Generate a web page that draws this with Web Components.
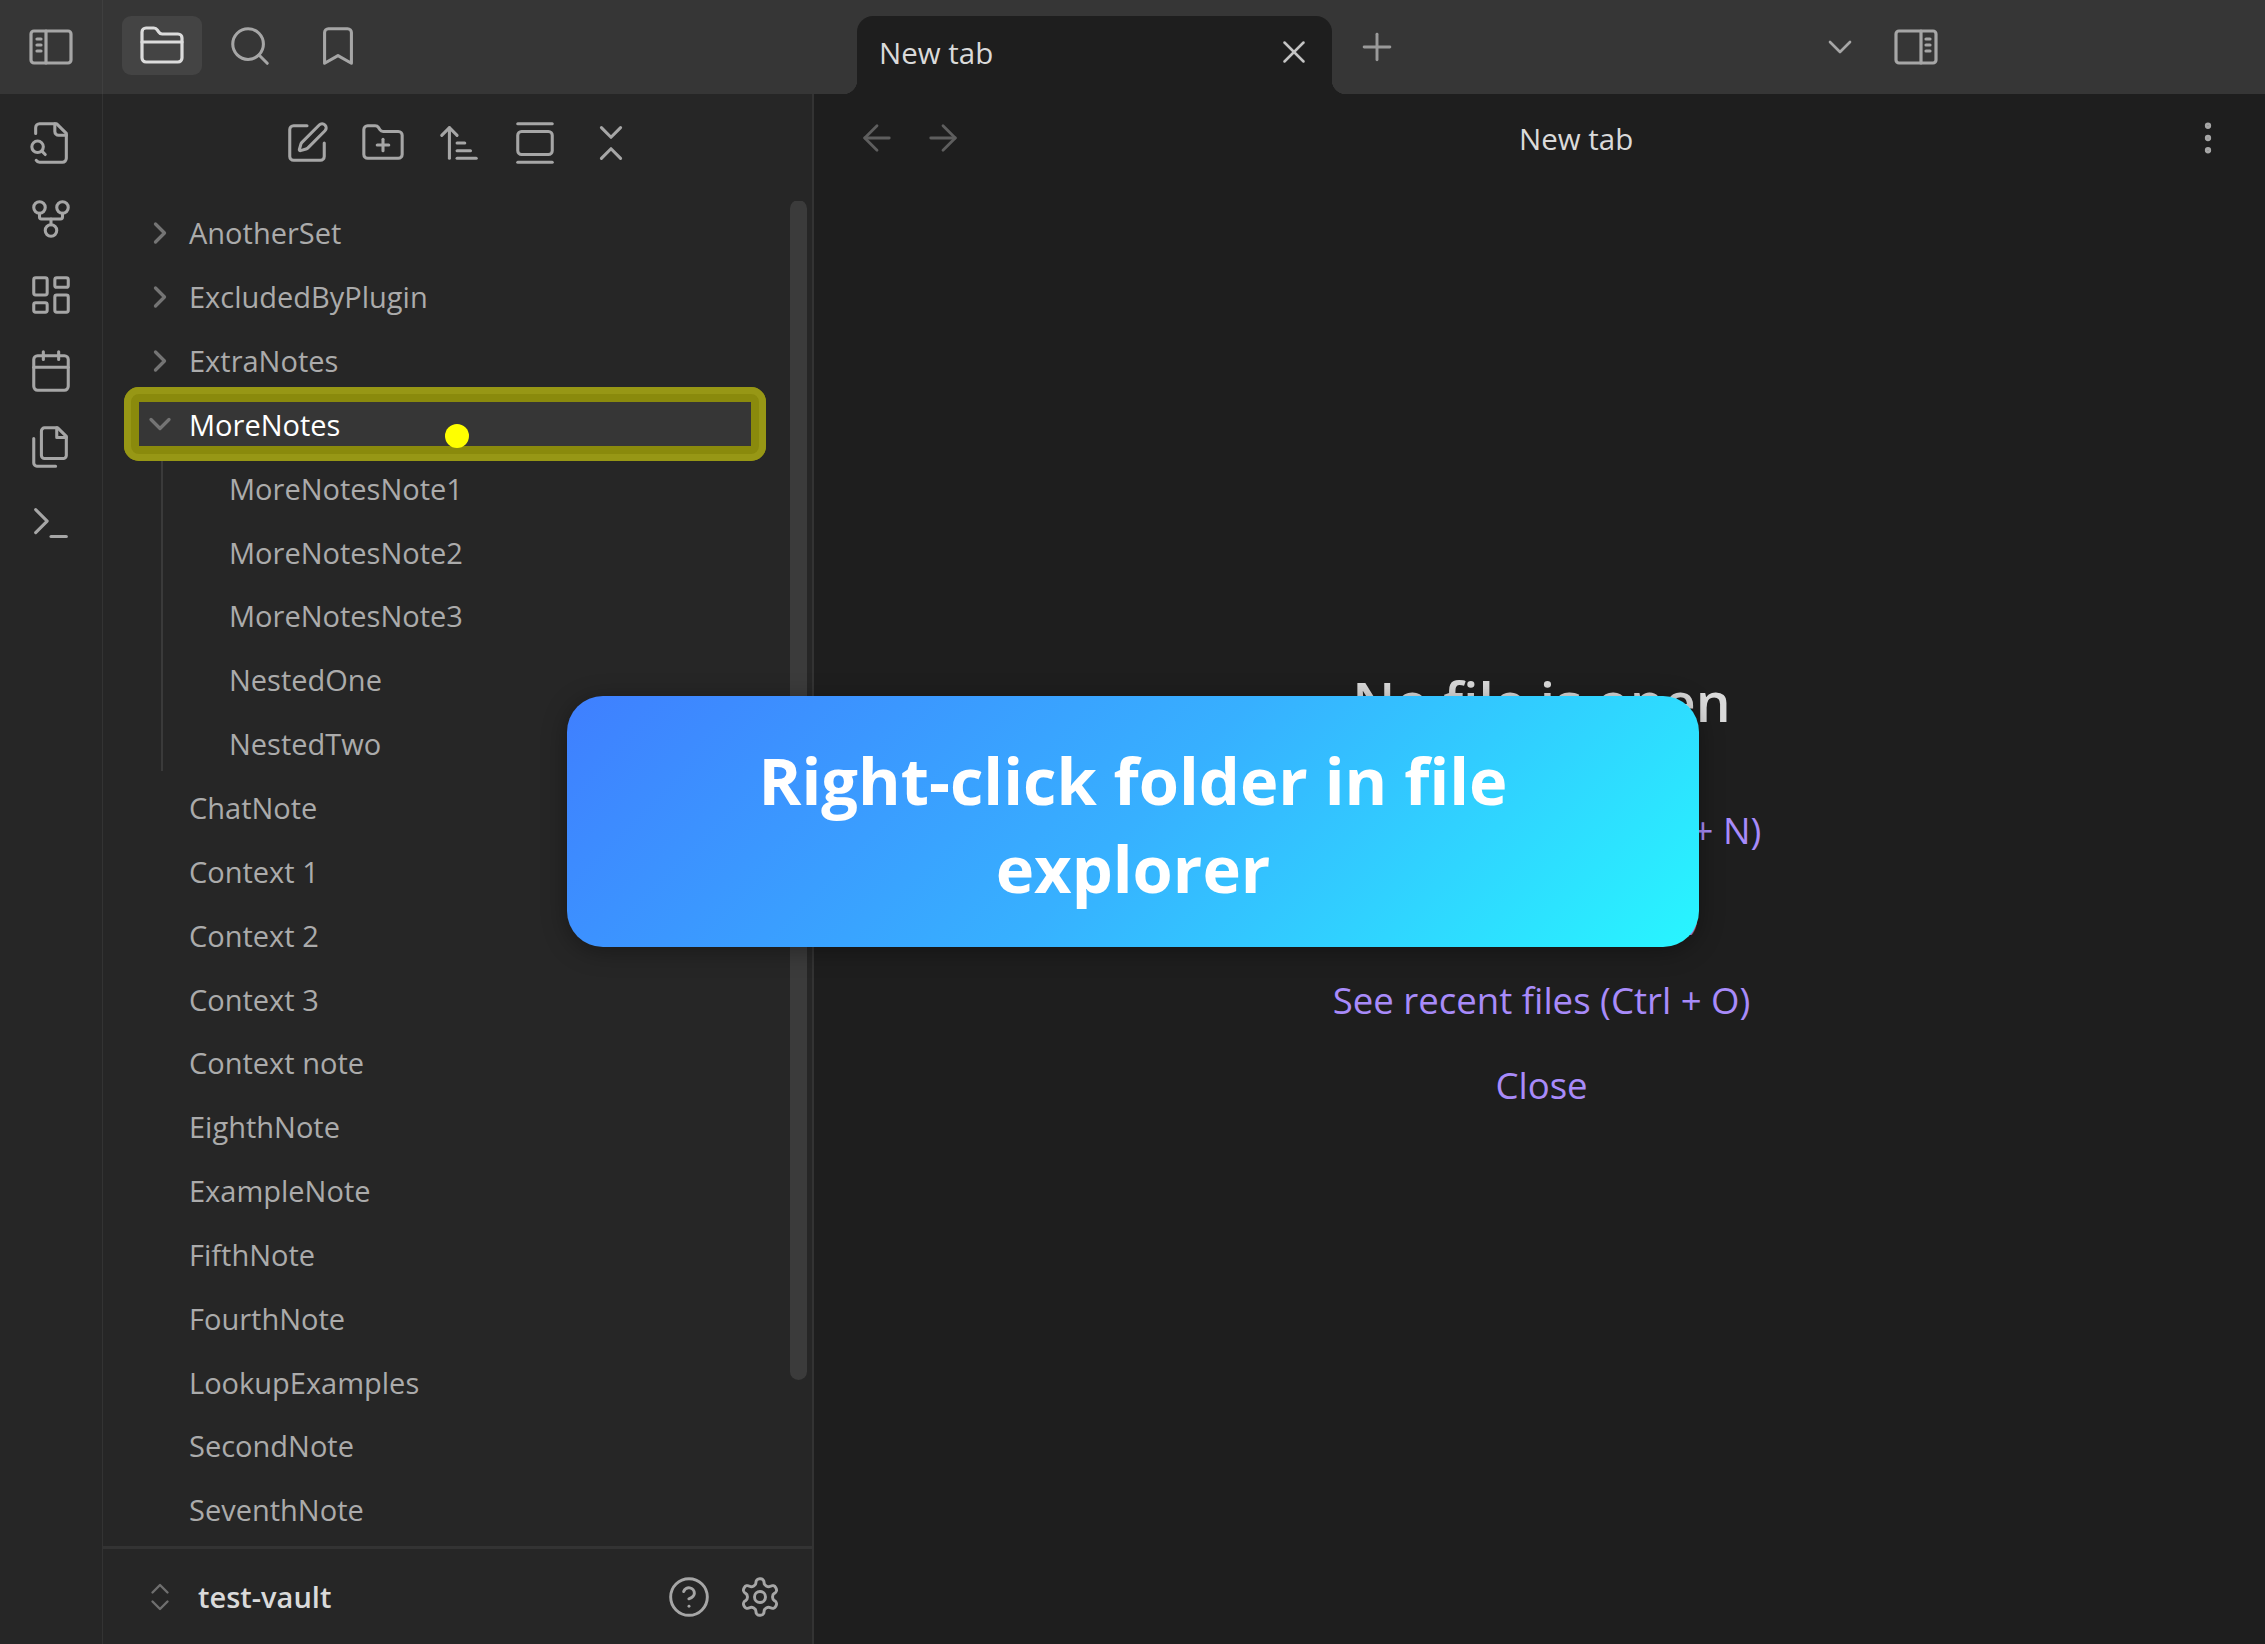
<!DOCTYPE html>
<html>
<head>
<meta charset="utf-8">
<title>test-vault</title>
<style>
    html, body { margin: 0; padding: 0; background: #1e1e1e; }
    body { font-family: "Open Sans", "Noto Sans", sans-serif; }
</style>
</head>
<body>
<app-frame>
    <title-bar slot="top"></title-bar>
    <ribbon-bar slot="ribbon"></ribbon-bar>
    <file-sidebar slot="side"></file-sidebar>
    <main-pane slot="main"></main-pane>
    <tutorial-card slot="overlay">Right-click folder in file explorer</tutorial-card>
</app-frame>

<script>
const ICONS = {
    sidebarLeft: '<rect x="2" y="4" width="20" height="16" rx="1.5"/><path d="M9.5 4v16"/><path d="M5 8h2M5 11h2M5 14h2"/>',
    sidebarRight: '<rect x="2" y="4" width="20" height="16" rx="1.5"/><path d="M14.5 4v16"/><path d="M17 8h2M17 11h2M17 14h2"/>',
    folder: '<path d="M20 20a2 2 0 0 0 2-2V8a2 2 0 0 0-2-2h-7.9a2 2 0 0 1-1.69-.9L9.6 3.9A2 2 0 0 0 7.93 3H4a2 2 0 0 0-2 2v13a2 2 0 0 0 2 2Z"/><path d="M2 10h20"/>',
    search: '<circle cx="11" cy="11" r="8"/><path d="m21 21-4.3-4.3"/>',
    bookmark: '<path d="m19 21-7-4-7 4V5a2 2 0 0 1 2-2h10a2 2 0 0 1 2 2v16z"/>',
    edit: '<path d="M12 3H5a2 2 0 0 0-2 2v14a2 2 0 0 0 2 2h14a2 2 0 0 0 2-2v-7"/><path d="M18.375 2.625a1 1 0 0 1 3 3l-9.013 9.014a2 2 0 0 1-.853.505l-2.873.84a.5.5 0 0 1-.62-.62l.84-2.873a2 2 0 0 1 .506-.852z"/>',
    folderPlus: '<path d="M20 20a2 2 0 0 0 2-2V8a2 2 0 0 0-2-2h-7.9a2 2 0 0 1-1.69-.9L9.6 3.9A2 2 0 0 0 7.93 3H4a2 2 0 0 0-2 2v13a2 2 0 0 0 2 2Z"/><path d="M12 10v6"/><path d="M9 13h6"/>',
    sort: '<path d="m3 8 4-4 4 4"/><path d="M7 4v16"/><path d="M11 12h4"/><path d="M11 16h7"/><path d="M11 20h10"/>',
    gallery: '<path d="M3 2h18"/><rect x="3" y="6" width="18" height="12" rx="2"/><path d="M3 22h18"/>',
    collapse: '<path d="m7 20 5-5 5 5"/><path d="m7 4 5 5 5-5"/>',
    fileSearch: '<path d="M14 2v4a2 2 0 0 0 2 2h4"/><path d="M4.268 21a2 2 0 0 0 1.727 1H18a2 2 0 0 0 2-2V7l-5-5H6a2 2 0 0 0-2 2v3"/><path d="m9 18-1.5-1.5"/><circle cx="5" cy="14" r="3"/>',
    fork: '<circle cx="12" cy="18" r="3"/><circle cx="6" cy="6" r="3"/><circle cx="18" cy="6" r="3"/><path d="M18 9v2c0 .6-.4 1-1 1H7c-.6 0-1-.4-1-1V9"/><path d="M12 12v3"/>',
    dashboard: '<rect x="3" y="3" width="7" height="9" rx="1"/><rect x="14" y="3" width="7" height="5" rx="1"/><rect x="14" y="12" width="7" height="9" rx="1"/><rect x="3" y="16" width="7" height="5" rx="1"/>',
    calendar: '<path d="M8 2v4"/><path d="M16 2v4"/><rect x="3" y="4" width="18" height="18" rx="2"/><path d="M3 10h18"/>',
    files: '<path d="M15.5 2H8.6c-.4 0-.8.2-1.1.5-.3.3-.5.7-.5 1.1v12.8c0 .4.2.8.5 1.1.3.3.7.5 1.1.5h9.8c.4 0 .8-.2 1.1-.5.3-.3.5-.7.5-1.1V6.5L15.5 2z"/><path d="M3 7.6v12.8c0 .4.2.8.5 1.1.3.3.7.5 1.1.5h9.8"/><path d="M15 2v5h5"/>',
    terminal: '<path d="m4 17 6-6-6-6"/><path d="M12 19h8"/>',
    close: '<path d="M18 6 6 18"/><path d="m6 6 12 12"/>',
    plus: '<path d="M5 12h14"/><path d="M12 5v14"/>',
    chevronDown: '<path d="m6 9 6 6 6-6"/>',
    chevronRight: '<path d="m9 18 6-6-6-6"/>',
    arrowLeft: '<path d="m12 19-7-7 7-7"/><path d="M19 12H5"/>',
    arrowRight: '<path d="M5 12h14"/><path d="m12 5 7 7-7 7"/>',
    more: '<circle cx="12" cy="5" r="1"/><circle cx="12" cy="12" r="1"/><circle cx="12" cy="19" r="1"/>',
    upDown: '<path d="m7 15 5 5 5-5"/><path d="m7 9 5-5 5 5"/>',
    help: '<circle cx="12" cy="12" r="10"/><path d="M9.09 9a3 3 0 0 1 5.83 1c0 2-3 3-3 3"/><path d="M12 17h.01"/>',
    gear: '<path d="M12.22 2h-.44a2 2 0 0 0-2 2v.18a2 2 0 0 1-1 1.73l-.43.25a2 2 0 0 1-2 0l-.15-.08a2 2 0 0 0-2.73.73l-.22.38a2 2 0 0 0 .73 2.73l.15.1a2 2 0 0 1 1 1.72v.51a2 2 0 0 1-1 1.74l-.15.09a2 2 0 0 0-.73 2.73l.22.38a2 2 0 0 0 2.73.73l.15-.08a2 2 0 0 1 2 0l.43.25a2 2 0 0 1 1 1.73V20a2 2 0 0 0 2 2h.44a2 2 0 0 0 2-2v-.18a2 2 0 0 1 1-1.73l.43-.25a2 2 0 0 1 2 0l.15.08a2 2 0 0 0 2.73-.73l.22-.39a2 2 0 0 0-.73-2.73l-.15-.08a2 2 0 0 1-1-1.74v-.5a2 2 0 0 1 1-1.74l.15-.09a2 2 0 0 0 .73-2.73l-.22-.38a2 2 0 0 0-2.73-.73l-.15.08a2 2 0 0 1-2 0l-.43-.25a2 2 0 0 1-1-1.73V4a2 2 0 0 0-2-2z"/><circle cx="12" cy="12" r="3"/>'
};

class UiIcon extends HTMLElement {
    connectedCallback() {
        const size = this.getAttribute('size') || 46;
        const stroke = this.getAttribute('stroke') || 1.6;
        const name = this.getAttribute('name');
        this.attachShadow({ mode: 'open' }).innerHTML = `
            <style>
                :host { display: inline-flex; align-items: center; justify-content: center; flex: none; color: var(--icon-color, #a6a6a6); }
                svg { display: block; fill: none; stroke: currentColor; stroke-linecap: round; stroke-linejoin: round; }
            </style>
            <svg width="${size}" height="${size}" viewBox="0 0 24 24" stroke-width="${stroke}">${ICONS[name]}</svg>
        `;
    }
}

class AppFrame extends HTMLElement {
    constructor() {
        super();
        this.attachShadow({ mode: 'open' }).innerHTML = `
            <style>
                :host { display: grid; position: relative; width: 2265px; height: 1644px; overflow: hidden;
                    grid-template-columns: 103px 711px 1fr; grid-template-rows: 94px 1fr; }
                .top { grid-column: 1 / 4; display: grid; }
                .ribbon, .side, .main { display: grid; min-height: 0; }
            </style>
            <div class="top"><slot name="top"></slot></div>
            <div class="ribbon"><slot name="ribbon"></slot></div>
            <div class="side"><slot name="side"></slot></div>
            <div class="main"><slot name="main"></slot></div>
            <slot name="overlay"></slot>
        `;
    }
}

class TitleBar extends HTMLElement {
    constructor() {
        super();
        this.attachShadow({ mode: 'open' }).innerHTML = `
            <style>
                :host { display: grid; grid-template-columns: 103px 711px 1fr; background: #363636; }
                .left, .tools, .tabs { display: flex; align-items: center; }
                .left { justify-content: center; border-right: 1px solid #3f3f3f; box-sizing: border-box; height: 94px; }
                .tools { padding-left: 19px; gap: 8px; align-items: flex-start; padding-top: 16px; }
                .btn { width: 80px; height: 59px; display: flex; align-items: center; justify-content: center; border-radius: 9px; }
                .btn.active { background: #444444; --icon-color: #dcdcdc; }
                .tabs { padding-left: 43px; padding-right: 325px; }
                .tab { position: relative; box-sizing: border-box; width: 475px; height: 78px; margin-top: 16px; background: #1e1e1e;
                    border-radius: 16px 16px 0 0; display: flex; align-items: center; padding: 0 19px 0 22px; color: #dadada; font-size: 29.5px; }
                .tab span { flex: 1; margin-top: -6px; }
                .tab ui-icon { margin-top: -6px; --icon-color: #c4c4c4; }
                .tab::before, .tab::after { content: ""; position: absolute; bottom: 0; width: 14px; height: 14px; }
                .tab::before { left: -14px; background: radial-gradient(circle at 0 0, transparent 14px, #1e1e1e 14.5px); }
                .tab::after { right: -14px; background: radial-gradient(circle at 100% 0, transparent 14px, #1e1e1e 14.5px); }
                .plus { margin-left: 23px; --icon-color: #9a9a9a; }
                .end { margin-left: auto; display: flex; align-items: center; gap: 32px; }
            </style>
            <div class="left"><ui-icon name="sidebarLeft" size="48"></ui-icon></div>
            <div class="tools">
                <div class="btn active"><ui-icon name="folder" size="48"></ui-icon></div>
                <div class="btn"><ui-icon name="search" size="46"></ui-icon></div>
                <div class="btn"><ui-icon name="bookmark" size="46"></ui-icon></div>
            </div>
            <div class="tabs">
                <div class="tab"><span>New tab</span><ui-icon name="close" size="38"></ui-icon></div>
                <ui-icon class="plus" name="plus" size="44"></ui-icon>
                <div class="end">
                    <ui-icon name="chevronDown" size="40"></ui-icon>
                    <ui-icon name="sidebarRight" size="48"></ui-icon>
                </div>
            </div>
        `;
    }
}

class RibbonBar extends HTMLElement {
    constructor() {
        super();
        const names = ['fileSearch', 'fork', 'dashboard', 'calendar', 'files', 'terminal'];
        this.attachShadow({ mode: 'open' }).innerHTML = `
            <style>
                :host { display: flex; flex-direction: column; align-items: center; gap: 30px; box-sizing: border-box;
                    padding-top: 26px; background: #262626; border-right: 1px solid #333333; }
            </style>
            ${names.map(n => `<ui-icon name="${n}" size="46"></ui-icon>`).join('')}
        `;
    }
}

class TreeRow extends HTMLElement {
    constructor() {
        super();
        this.attachShadow({ mode: 'open' }).innerHTML = `
            <style>
                :host { display: flex; align-items: center; position: relative; height: 63.85px; flex: none; color: #ababab; font-size: 29px; white-space: nowrap; }
                .arrow { position: relative; z-index: 2; width: 40px; margin-left: 37px; margin-right: 9px; display: flex; justify-content: center; --icon-color: #747474; }
                .label { position: relative; z-index: 2; }
                :host([depth="1"]) .label { margin-left: 126px; }
                :host([depth="0"]) .label { margin-left: 86px; }
                :host([arrow]) .label { margin-left: 0; }
                :host([active]) { color: #ffffff; }
                .focus { position: absolute; left: 21px; right: 46px; top: -6px; bottom: -5px; box-sizing: border-box;
                    border-radius: 15px; background: #363636; border: 15px solid #8a8a0c; }
                .focus::before { content: ""; position: absolute; inset: -15px; border: 7px solid #979715; border-radius: 15px; }
                .dot { position: absolute; left: 342px; top: 31px; width: 24px; height: 24px; border-radius: 50%; background: #ffff00; z-index: 3; }
            </style>
            ${this.hasAttribute('active') ? '<div class="focus"></div><div class="dot"></div>' : ''}
            ${this.hasAttribute('arrow') ? `<div class="arrow"><ui-icon name="${this.getAttribute('arrow') === 'open' ? 'chevronDown' : 'chevronRight'}" size="36" stroke="2.2"></ui-icon></div>` : ''}
            <span class="label"><slot></slot></span>
        `;
    }
}

class FileSidebar extends HTMLElement {
    constructor() {
        super();
        const rows = [
            ['AnotherSet', 0, 'closed'], ['ExcludedByPlugin', 0, 'closed'], ['ExtraNotes', 0, 'closed'], ['MoreNotes', 0, 'open', true],
            ['MoreNotesNote1', 1], ['MoreNotesNote2', 1], ['MoreNotesNote3', 1], ['NestedOne', 1], ['NestedTwo', 1],
            ['ChatNote', 0], ['Context 1', 0], ['Context 2', 0], ['Context 3', 0], ['Context note', 0], ['EighthNote', 0],
            ['ExampleNote', 0], ['FifthNote', 0], ['FourthNote', 0], ['LookupExamples', 0], ['SecondNote', 0], ['SeventhNote', 0]
        ];
        this.attachShadow({ mode: 'open' }).innerHTML = `
            <style>
                :host { display: flex; flex-direction: column; background: #262626; border-right: 2px solid #333333; box-sizing: border-box; min-height: 0; }
                .toolbar { display: flex; justify-content: center; gap: 30px; height: 107px; padding: 0 0 9px 2px; box-sizing: border-box; flex: none; }
                .list { position: relative; flex: 1; display: flex; flex-direction: column; overflow: hidden; }
                .guide { position: absolute; left: 58px; top: 257px; height: 313px; width: 2px; background: #3a3a3a; }
                .thumb { position: absolute; right: 5px; top: -1px; width: 17px; height: 1180px; border-radius: 9px; background: #3b3b3b; }
                .footer { flex: none; height: 98px; border-top: 3px solid #333333; box-sizing: border-box; display: flex; align-items: center;
                    padding: 0 30px 0 39px; color: #dadada; font-size: 29px; font-weight: 600; }
                .footer .name { flex: 1; margin-left: 20px; }
                .chev { --icon-color: #6f6f6f; }
                .footer .help { margin-right: 27px; }
            </style>
            <div class="toolbar">
                <ui-icon name="edit" size="46"></ui-icon>
                <ui-icon name="folderPlus" size="46"></ui-icon>
                <ui-icon name="sort" size="46"></ui-icon>
                <ui-icon name="gallery" size="46"></ui-icon>
                <ui-icon name="collapse" size="46"></ui-icon>
            </div>
            <div class="list">
                <div class="thumb"></div>
                <div class="guide"></div>
                ${rows.map(([label, depth, arrow, active]) =>
                    `<tree-row depth="${depth}"${arrow ? ` arrow="${arrow}"` : ''}${active ? ' active' : ''}>${label}</tree-row>`).join('')}
            </div>
            <div class="footer">
                <ui-icon class="chev" name="upDown" size="36"></ui-icon>
                <span class="name">test-vault</span>
                <ui-icon class="help" name="help" size="44"></ui-icon>
                <ui-icon name="gear" size="44"></ui-icon>
            </div>
        `;
    }
}

class MainPane extends HTMLElement {
    constructor() {
        super();
        this.attachShadow({ mode: 'open' }).innerHTML = `
            <style>
                :host { display: flex; flex-direction: column; background: #1e1e1e; color: #dadada; min-height: 0; }
                .head { flex: none; height: 88px; display: grid; grid-template-columns: 663px auto 1fr; align-items: center; padding: 0 36px 0 42px; font-size: 29.5px; }
                .nav { display: flex; gap: 24px; --icon-color: #5e5e5e; }
                .more { justify-self: end; }
                .empty { flex: 1; display: flex; flex-direction: column; align-items: center; padding-top: 483px; padding-left: 4px; }
                h1 { margin: 0 0 68px; font-size: 55px; font-weight: 600; line-height: 72px; color: #dadada; }
                a { display: block; color: #a88bfa; font-size: 36.6px; line-height: 50px; margin-bottom: 35px; text-decoration: none; }
            </style>
            <div class="head">
                <div class="nav"><ui-icon name="arrowLeft" size="42"></ui-icon><ui-icon name="arrowRight" size="42"></ui-icon></div>
                <div class="title">New tab</div>
                <ui-icon class="more" name="more" size="42"></ui-icon>
            </div>
            <div class="empty">
                <h1>No file is open</h1>
                <a>Create new note (Ctrl + N)</a>
                <a>Go to file (Ctrl + O)</a>
                <a>See recent files (Ctrl + O)</a>
                <a>Close</a>
            </div>
        `;
    }
}

class TutorialCard extends HTMLElement {
    constructor() {
        super();
        this.attachShadow({ mode: 'open' }).innerHTML = `
            <style>
                :host { position: absolute; left: 567px; top: 696px; width: 1132px; height: 251px; box-sizing: border-box; z-index: 10;
                    display: flex; align-items: center; justify-content: center; text-align: center; padding: 5px 150px 0;
                    border-radius: 36px; background: linear-gradient(135deg, #3f7fff 0%, #37b0ff 50%, #28f6ff 100%);
                    box-shadow: 0 4px 24px rgba(0, 0, 0, 0.35); color: #ffffff; font-size: 65px; line-height: 88px; font-weight: 700; }
            </style>
            <slot></slot>
        `;
    }
}

customElements.define('ui-icon', UiIcon);
customElements.define('app-frame', AppFrame);
customElements.define('title-bar', TitleBar);
customElements.define('ribbon-bar', RibbonBar);
customElements.define('tree-row', TreeRow);
customElements.define('file-sidebar', FileSidebar);
customElements.define('main-pane', MainPane);
customElements.define('tutorial-card', TutorialCard);
</script>
</body>
</html>
